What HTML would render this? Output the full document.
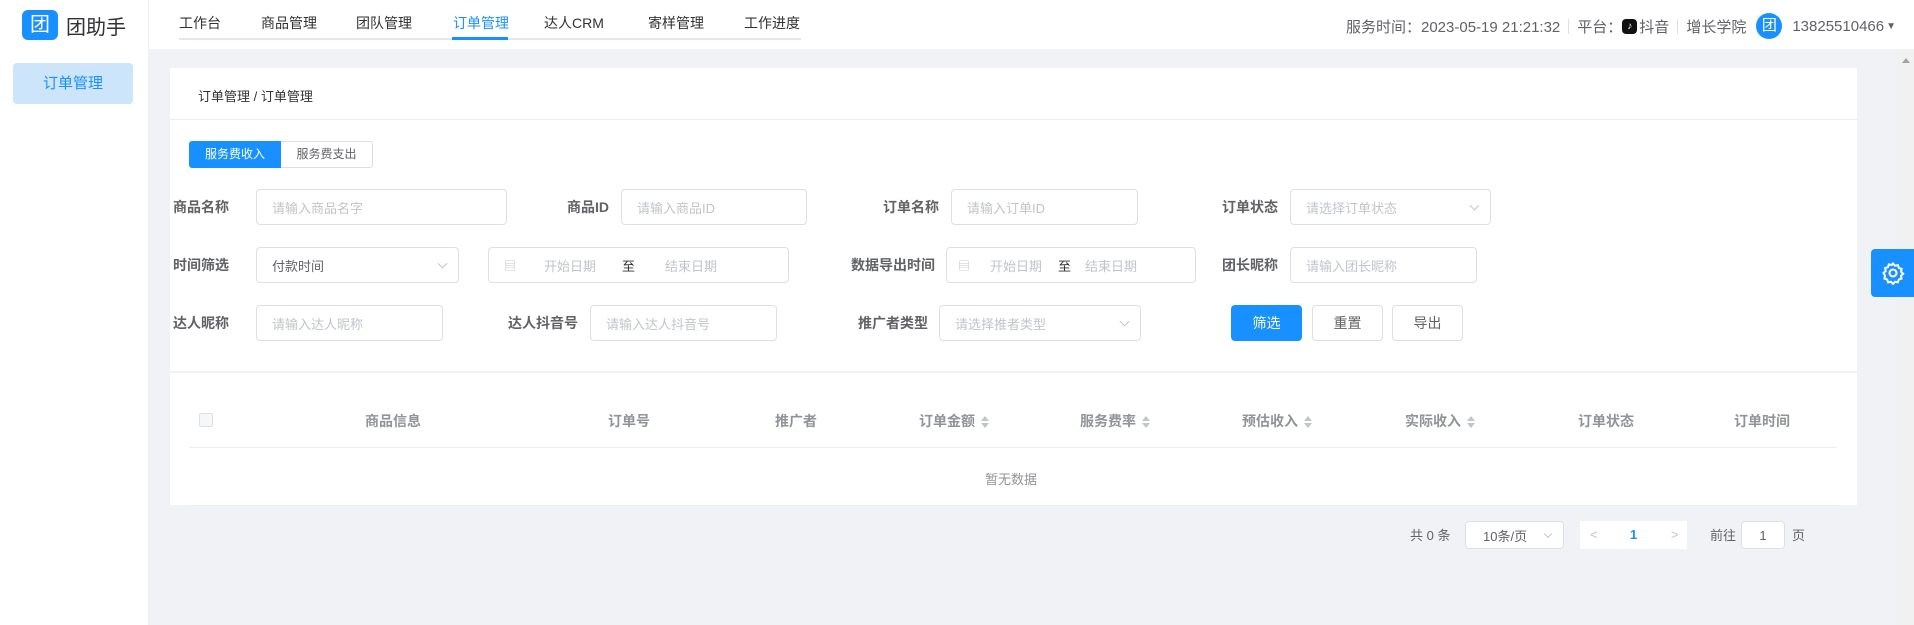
<!DOCTYPE html>
<html><head><meta charset="utf-8">
<style>
*{box-sizing:border-box;margin:0;padding:0}
body{width:1914px;height:625px;overflow:hidden;background:#f0f2f5;font-family:"Liberation Sans","Noto Sans CJK SC",sans-serif;position:relative;color:#303133}
.a{position:absolute}
.hdr{left:0;top:0;width:1914px;height:49px;background:#fff}
.side{left:0;top:0;width:149px;height:625px;background:#fff;border-right:1px solid #eef0f3}
.nav{top:13px;font-size:14px;color:#303133}
.lbl{font-size:14px;color:#606266;font-weight:bold;line-height:20px}
.inp{border:1px solid #dcdfe6;border-radius:4px;background:#fff;font-size:13px;color:#c0c4cc;padding-left:15px;display:flex;align-items:center}
.arr{position:absolute;right:12px;top:50%;width:7px;height:7px;border-right:1px solid #c0c4cc;border-bottom:1px solid #c0c4cc;transform:translateY(-70%) rotate(45deg)}
.th{top:411px;font-size:14px;color:#909399;font-weight:bold}
.sort{display:inline-block;vertical-align:middle;margin-left:6px;width:8px;height:12px;position:relative}
.sort:before{content:"";position:absolute;left:0;top:0;border:4px solid transparent;border-bottom:5px solid #c0c4cc;border-top:0}
.sort:after{content:"";position:absolute;left:0;top:7px;border:4px solid transparent;border-top:5px solid #c0c4cc;border-bottom:0}
.btn{border:1px solid #dcdfe6;border-radius:4px;background:#fff;font-size:14px;color:#606266;display:flex;align-items:center;justify-content:center}
</style></head><body>
<div class="a hdr"></div>
<div class="a side"></div>
<div class="a" style="left:22px;top:10px;width:36px;height:30px;background:#1890ff;border-radius:6px;color:#fff;font-size:20px;line-height:30px;text-align:center">团</div>
<div class="a" style="left:66px;top:11px;font-size:20px;color:#303133">团助手</div>
<div class="a" style="left:13px;top:63px;width:120px;height:41px;background:#cce5fb;border-radius:4px;color:#1890ff;font-size:15px;line-height:41px;text-align:center">订单管理</div>

<div class="a" style="left:179px;top:38px;width:622px;height:2px;background:#e4e7ed"></div>
<div class="a" style="left:452px;top:37px;width:56px;height:3px;background:#1890ff"></div>
<div class="a nav" style="left:179px">工作台</div>
<div class="a nav" style="left:261px">商品管理</div>
<div class="a nav" style="left:356px">团队管理</div>
<div class="a nav" style="left:453px;color:#1890ff">订单管理</div>
<div class="a nav" style="left:544px">达人CRM</div>
<div class="a nav" style="left:648px">寄样管理</div>
<div class="a nav" style="left:744px">工作进度</div>

<div class="a" style="right:18px;top:13px;font-size:15px;color:#606266;display:flex;align-items:center;white-space:nowrap">
服务时间：2023-05-19 21:21:32<span style="display:inline-block;width:1px;height:15px;background:#dcdfe6;margin:0 8px"></span>平台：<span style="display:inline-block;width:15px;height:15px;border-radius:4px;background:#111;color:#fff;font-size:10px;line-height:15px;text-align:center;margin-right:2px">♪</span>抖音<span style="display:inline-block;width:1px;height:15px;background:#dcdfe6;margin:0 8px"></span>增长学院<span style="display:inline-block;width:26px;height:26px;border-radius:50%;background:#1890ff;color:#fff;font-size:15px;line-height:26px;text-align:center;margin:0 10px 0 10px">团</span>13825510466<span style="font-size:10px;margin-left:2px">▼</span></div>

<div class="a" style="left:1897px;top:49px;width:17px;height:576px;background:#f1f1f1"></div>
<div class="a" style="left:1902px;top:58px;border:4px solid transparent;border-bottom:5px solid #a3a3a3;border-top:0"></div>

<div class="a" style="left:170px;top:68px;width:1687px;height:437px;background:#fff"></div>
<div class="a" style="left:198px;top:86px;font-size:13px;color:#303133">订单管理 / 订单管理</div>
<div class="a" style="left:170px;top:119px;width:1687px;height:1px;background:#ebeef5"></div>

<div class="a" style="left:189px;top:141px;width:92px;height:27px;background:#1890ff;border-radius:3px 0 0 3px;color:#fff;font-size:12px;line-height:27px;text-align:center">服务费收入</div>
<div class="a" style="left:281px;top:141px;width:92px;height:27px;border:1px solid #dcdfe6;border-left:0;border-radius:0 3px 3px 0;color:#606266;font-size:12px;line-height:25px;text-align:center">服务费支出</div>

<!-- row1 -->
<div class="a lbl" style="left:173px;top:197px">商品名称</div>
<div class="a inp" style="left:256px;top:189px;width:251px;height:36px">请输入商品名字</div>
<div class="a lbl" style="left:567px;top:197px">商品ID</div>
<div class="a inp" style="left:621px;top:189px;width:186px;height:36px">请输入商品ID</div>
<div class="a lbl" style="left:883px;top:197px">订单名称</div>
<div class="a inp" style="left:951px;top:189px;width:187px;height:36px">请输入订单ID</div>
<div class="a lbl" style="left:1222px;top:197px">订单状态</div>
<div class="a inp" style="left:1290px;top:189px;width:201px;height:36px">请选择订单状态<i class="arr"></i></div>

<!-- row2 -->
<div class="a lbl" style="left:173px;top:255px">时间筛选</div>
<div class="a inp" style="left:256px;top:247px;width:203px;height:36px;color:#606266">付款时间<i class="arr"></i></div>
<div class="a inp" style="left:488px;top:247px;width:301px;height:36px"><span style="font-size:12px;margin-right:28px">▤</span>开始日期<span style="color:#303133;margin:0 30px 0 26px">至</span>结束日期</div>
<div class="a lbl" style="left:851px;top:255px">数据导出时间</div>
<div class="a inp" style="left:946px;top:247px;width:250px;height:36px;padding-left:11px"><span style="font-size:12px;margin-right:20px">▤</span>开始日期<span style="color:#303133;margin:0 14px 0 16px">至</span>结束日期</div>
<div class="a lbl" style="left:1222px;top:255px">团长昵称</div>
<div class="a inp" style="left:1290px;top:247px;width:187px;height:36px">请输入团长昵称</div>

<!-- row3 -->
<div class="a lbl" style="left:173px;top:313px">达人昵称</div>
<div class="a inp" style="left:256px;top:305px;width:187px;height:36px">请输入达人昵称</div>
<div class="a lbl" style="left:508px;top:313px">达人抖音号</div>
<div class="a inp" style="left:590px;top:305px;width:187px;height:36px">请输入达人抖音号</div>
<div class="a lbl" style="left:858px;top:313px">推广者类型</div>
<div class="a inp" style="left:939px;top:305px;width:202px;height:36px">请选择推者类型<i class="arr"></i></div>
<div class="a btn" style="left:1231px;top:305px;width:71px;height:36px;background:#1890ff;border-color:#1890ff;color:#fff">筛选</div>
<div class="a btn" style="left:1312px;top:305px;width:71px;height:36px">重置</div>
<div class="a btn" style="left:1392px;top:305px;width:71px;height:36px">导出</div>

<div class="a" style="left:170px;top:371px;width:1687px;height:2px;background:#f0f2f5"></div>

<!-- table -->
<div class="a" style="left:199px;top:413px;width:14px;height:14px;border:1px solid #dcdfe6;border-radius:2px;background:#f5f7fa"></div>
<div class="a th" style="left:365px">商品信息</div>
<div class="a th" style="left:608px">订单号</div>
<div class="a th" style="left:775px">推广者</div>
<div class="a th" style="left:919px">订单金额<i class="sort"></i></div>
<div class="a th" style="left:1080px">服务费率<i class="sort"></i></div>
<div class="a th" style="left:1242px">预估收入<i class="sort"></i></div>
<div class="a th" style="left:1405px">实际收入<i class="sort"></i></div>
<div class="a th" style="left:1578px">订单状态</div>
<div class="a th" style="left:1734px">订单时间</div>
<div class="a" style="left:189px;top:447px;width:1648px;height:1px;background:#ebeef5"></div>
<div class="a" style="left:985px;top:469px;font-size:13px;color:#909399">暂无数据</div>
<div class="a" style="left:189px;top:505px;width:1648px;height:1px;background:#ebeef5"></div>

<!-- pagination -->
<div class="a" style="left:1410px;top:525px;font-size:13px;color:#606266">共 0 条</div>
<div class="a inp" style="left:1465px;top:521px;width:99px;height:28px;color:#606266;font-size:13px;padding-left:17px">10条/页<i class="arr" style="width:6px;height:6px"></i></div>
<div class="a" style="left:1580px;top:521px;width:107px;height:28px;background:#fff;font-size:13px;color:#c0c4cc;line-height:28px">
<span class="a" style="left:10px">&lt;</span><span class="a" style="left:50px;color:#1890ff;font-weight:bold">1</span><span class="a" style="left:91px">&gt;</span></div>
<div class="a" style="left:1710px;top:525px;font-size:13px;color:#606266">前往</div>
<div class="a inp" style="left:1741px;top:521px;width:44px;height:28px;color:#606266;justify-content:center;padding:0">1</div>
<div class="a" style="left:1792px;top:525px;font-size:13px;color:#606266">页</div>

<!-- gear -->
<div class="a" style="left:1871px;top:249px;width:43px;height:48px;background:#1890ff;border-radius:4px 0 0 4px"></div>
<svg class="a" style="left:1881px;top:261px" width="24" height="24" viewBox="0 0 24 24" fill="none" stroke="#fff" stroke-width="2"><path d="M12 2.5l2 2.2 2.9-.6.9 2.8 2.8.9-.6 2.9 2.2 2-2.2 2 .6 2.9-2.8.9-.9 2.8-2.9-.6-2 2.2-2-2.2-2.9.6-.9-2.8-2.8-.9.6-2.9L2.5 12l2.2-2-.6-2.9 2.8-.9.9-2.8 2.9.6z"/><circle cx="12" cy="12" r="3.5"/></svg>
</body></html>
